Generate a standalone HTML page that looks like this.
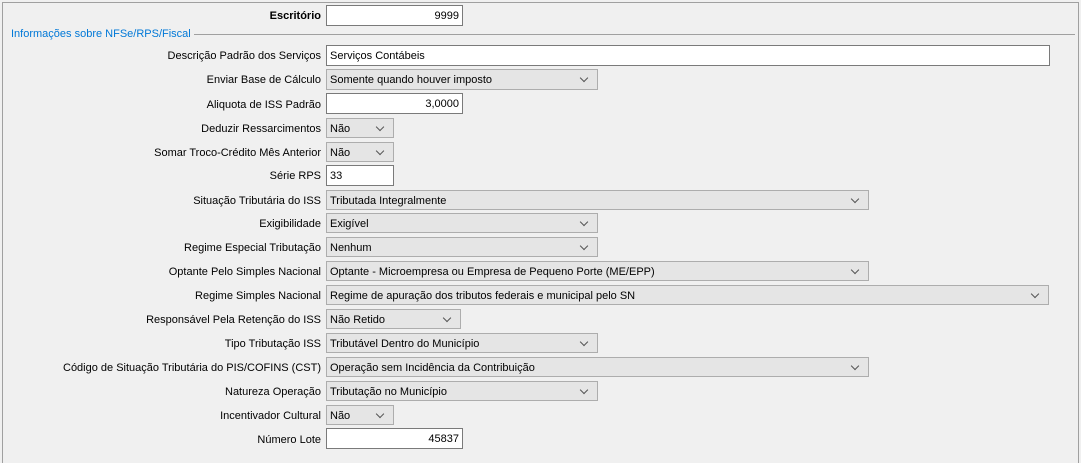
<!DOCTYPE html><html><head><style>
body{margin:0;width:1081px;height:454px;background:#f0f0f0;font-family:"Liberation Sans",sans-serif;font-size:11px;color:#000;position:relative;overflow:hidden}
.fr{position:absolute;left:2px;top:2px;width:1075px;height:460px;border:1px solid #a0a0a0;border-bottom:none}
.l{position:absolute;right:760px;white-space:nowrap;text-align:right;margin-top:2px}
.f{position:absolute;left:326px;height:20px;box-sizing:border-box;border:1px solid #7a7a7a;background:#fff;line-height:18px;padding:1px 3px 0;white-space:nowrap}
.r{text-align:right}
.s{background:#e5e5e5;border-color:#adadad}
.s:after{content:"";position:absolute;right:10px;top:5px;width:5px;height:5px;border-right:1px solid #555;border-bottom:1px solid #555;transform:rotate(45deg)}
</style></head><body>
<div class="fr"></div>
<div class="l" style="top:8px;font-weight:bold">Escritório</div><div class="f r" style="top:5px;width:137px;height:21px;line-height:19px">9999</div>
<div style="position:absolute;left:11px;top:28px;color:#0078d7">Informações sobre NFSe/RPS/Fiscal</div>
<div style="position:absolute;left:194px;top:34px;width:881px;border-top:1px solid #a0a0a0"></div>
<div class="l" style="top:48px">Descrição Padrão dos Serviços</div><div class="f" style="top:45px;width:724px;height:21px;line-height:19px">Serviços Contábeis</div>
<div class="l" style="top:72px">Enviar Base de Cálculo</div><div class="f s" style="top:69px;width:272px;height:21px;line-height:19px">Somente quando houver imposto</div>
<div class="l" style="top:97px">Aliquota de ISS Padrão</div><div class="f r" style="top:93px;width:137px;height:21px;line-height:19px">3,0000</div>
<div class="l" style="top:121px">Deduzir Ressarcimentos</div><div class="f s" style="top:118px;width:68px">Não</div>
<div class="l" style="top:145px">Somar Troco-Crédito Mês Anterior</div><div class="f s" style="top:142px;width:68px">Não</div>
<div class="l" style="top:168px">Série RPS</div><div class="f" style="top:165px;width:68px;height:21px;line-height:19px">33</div>
<div class="l" style="top:193px">Situação Tributária do ISS</div><div class="f s" style="top:190px;width:543px">Tributada Integralmente</div>
<div class="l" style="top:216px">Exigibilidade</div><div class="f s" style="top:213px;width:272px">Exigível</div>
<div class="l" style="top:240px">Regime Especial Tributação</div><div class="f s" style="top:237px;width:272px">Nenhum</div>
<div class="l" style="top:264px">Optante Pelo Simples Nacional</div><div class="f s" style="top:261px;width:543px">Optante - Microempresa ou Empresa de Pequeno Porte (ME/EPP)</div>
<div class="l" style="top:288px">Regime Simples Nacional</div><div class="f s" style="top:285px;width:723px">Regime de apuração dos tributos federais e municipal pelo SN</div>
<div class="l" style="top:312px">Responsável Pela Retenção do ISS</div><div class="f s" style="top:309px;width:135px">Não Retido</div>
<div class="l" style="top:336px">Tipo Tributação ISS</div><div class="f s" style="top:333px;width:272px">Tributável Dentro do Município</div>
<div class="l" style="top:360px">Código de Situação Tributária do PIS/COFINS (CST)</div><div class="f s" style="top:357px;width:543px">Operação sem Incidência da Contribuição</div>
<div class="l" style="top:384px">Natureza Operação</div><div class="f s" style="top:381px;width:272px">Tributação no Município</div>
<div class="l" style="top:408px">Incentivador Cultural</div><div class="f s" style="top:405px;width:68px">Não</div>
<div class="l" style="top:432px">Número Lote</div><div class="f r" style="top:428px;width:137px;height:21px;line-height:19px">45837</div>
</body></html>
